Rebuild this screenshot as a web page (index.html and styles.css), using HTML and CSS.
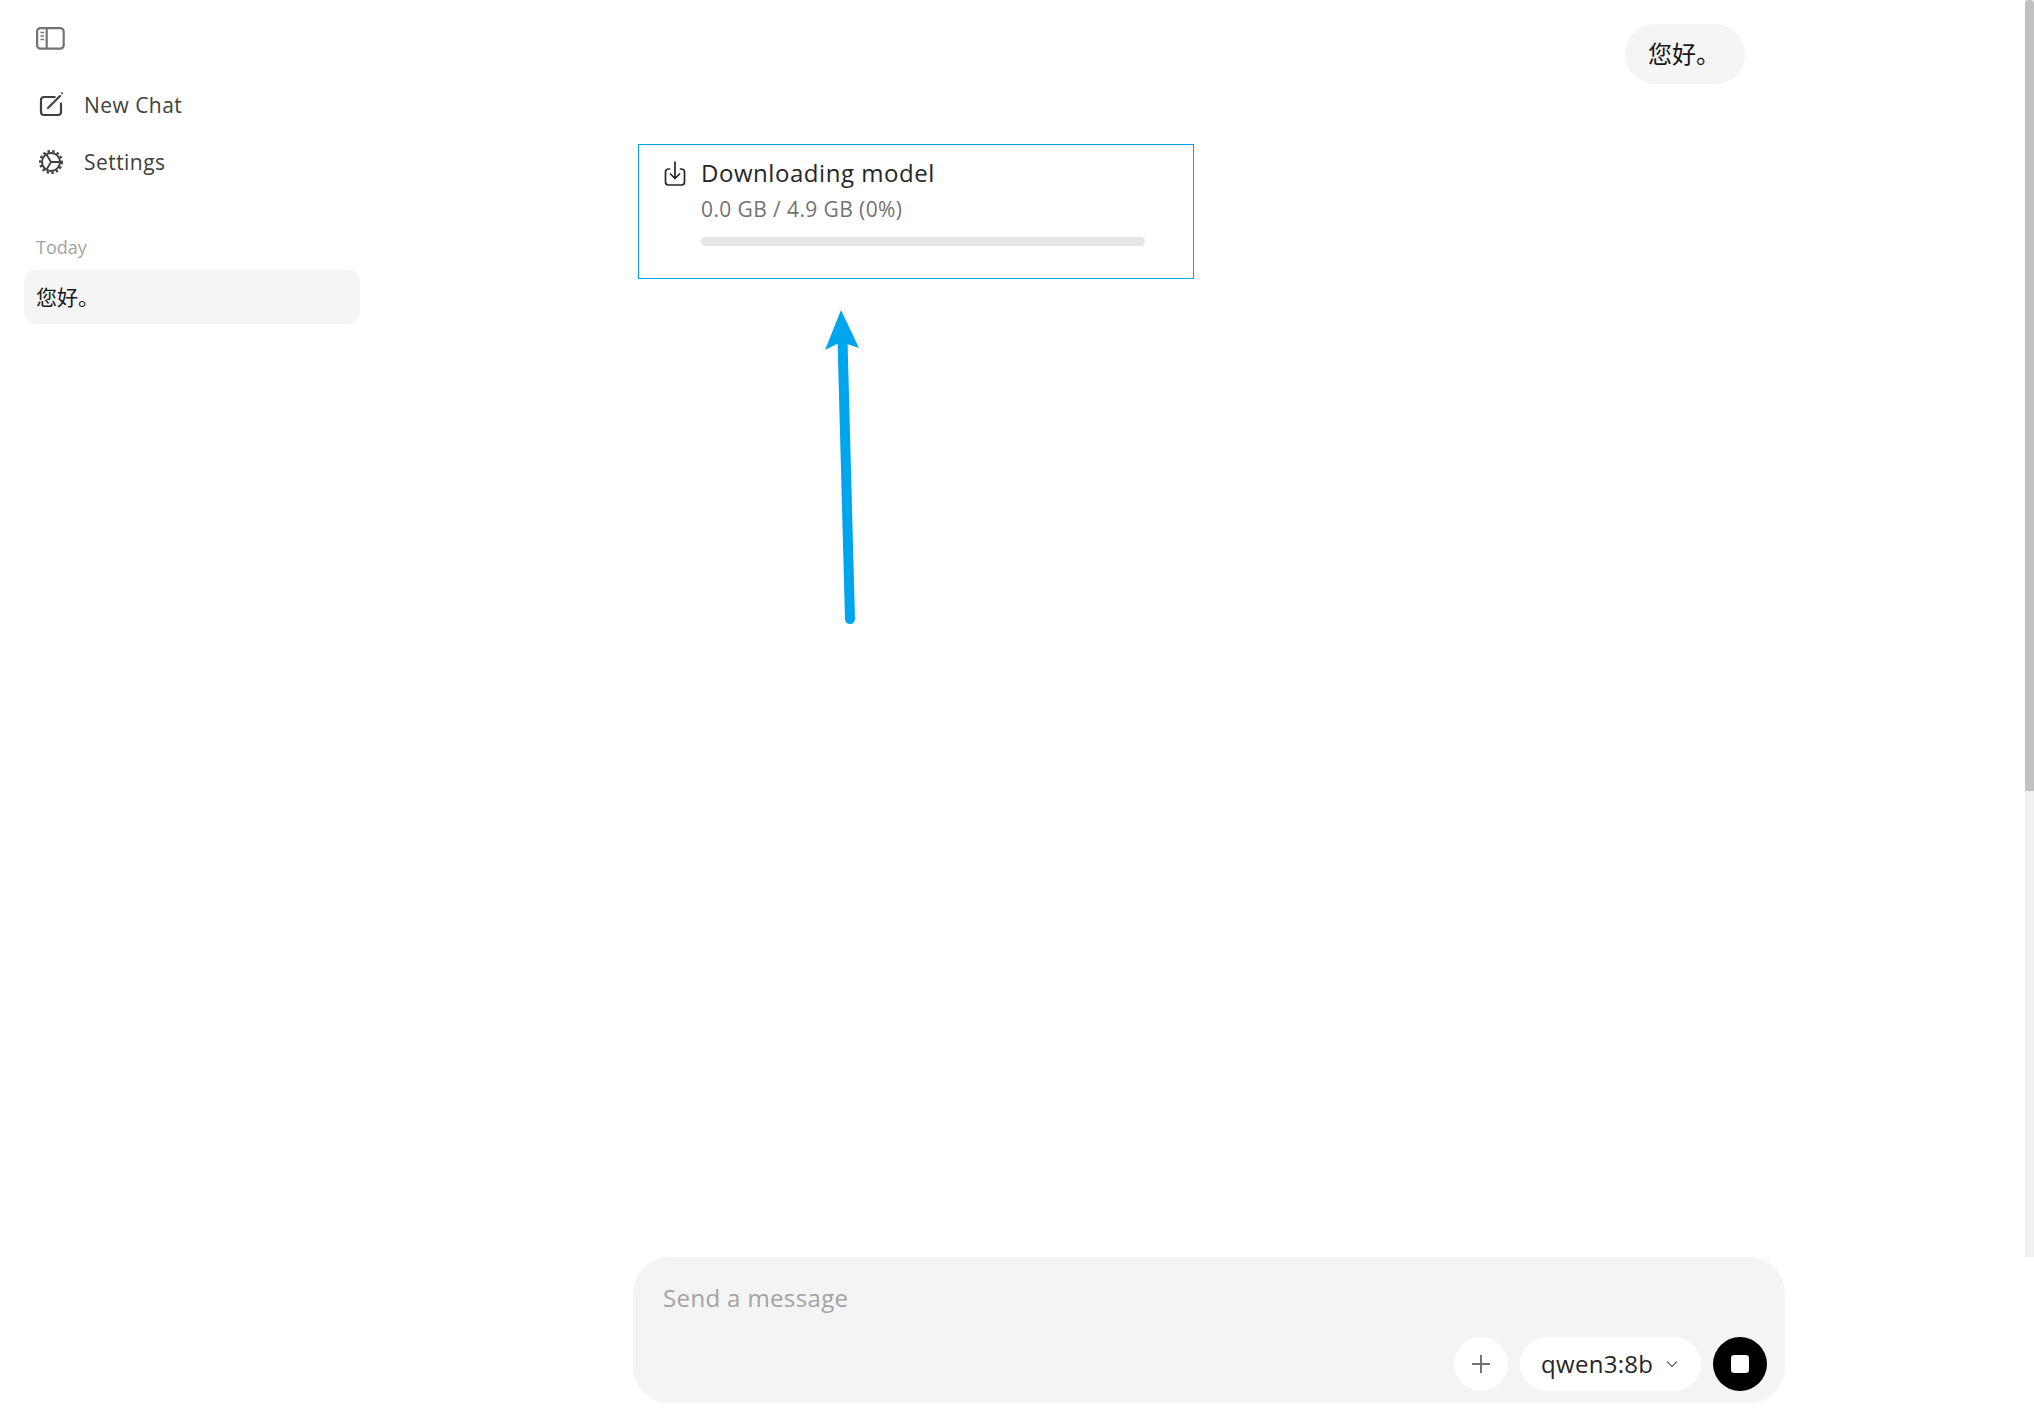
FILE: index.html
```html
<!DOCTYPE html>
<html lang="en">
<head>
<meta charset="utf-8">
<title>Chat</title>
<link rel="stylesheet" href="styles.css">
</head>
<body>
<div class="app">
  <aside class="sidebar">
    <button class="toggle" aria-label="Toggle sidebar">
      <svg class="toggle-icon" viewBox="0 0 30 24" fill="none" stroke="#737373" stroke-width="2.200">
        <rect x="1.100" y="1.100" width="26.600" height="20.600" rx="3.500"/>
        <path d="M10.700 1.500V21.500"/>
        <path d="M4.500 5.500H8M4.500 9H8M4.500 12.500H8" stroke-width="1.500"/>
      </svg>
    </button>
    <nav class="nav">
      <a class="nav-row">
        <svg class="nav-icon nav-icon-open" viewBox="-1 1 24 24" fill="none" stroke="#404040" stroke-width="2.200" stroke-linecap="round">
          <path d="M14.700 5H4A3 3 0 0 0 1 8V20A3 3 0 0 0 4 23H18A3 3 0 0 0 21 20V11.500"/>
          <path d="M8 16L20 4"/>
          <circle cx="22" cy="1.200" r="1" fill="#404040" stroke="none"/>
        </svg>
        <span>New Chat</span>
      </a>
      <a class="nav-row">
        <svg class="nav-icon" viewBox="0 0 24 24" fill="none" stroke="#404040">
          <circle cx="12" cy="12" r="9" stroke-width="2"/>
          <circle cx="12" cy="12" r="10.800" stroke-width="2.400" stroke-dasharray="2.400 2.310"/>
          <path d="M12 12H21M12 12L7.500 4.500M12 12L7.500 19.500" stroke-width="1.800"/>
        </svg>
        <span>Settings</span>
      </a>
    </nav>
    <div class="section-label">Today</div>
    <div class="history-item"><span class="history-text">您好。</span></div>
  </aside>

  <main class="main">
    <section class="thread">
      <div class="column">
        <div class="bubble-row"><div class="bubble">您好。</div></div>
        <div class="download-card">
          <svg class="download-icon" viewBox="0 0 24 26" fill="none" stroke="#262626" stroke-width="1.700" stroke-linecap="round" stroke-linejoin="round">
            <path d="M6.500 8H5.500A3 3 0 0 0 2.500 11V21A3 3 0 0 0 5.500 24H18.500A3 3 0 0 0 21.500 21V11A3 3 0 0 0 18.500 8H17.500"/>
            <path d="M12 1V17.500M7.500 13L12 17.500L16.500 13"/>
          </svg>
          <div class="download-body">
            <div class="download-title">Downloading model</div>
            <div class="download-meta">0.0 GB / 4.9 GB (0%)</div>
            <div class="progress"><div class="progress-fill"></div></div>
          </div>
        </div>
      </div>
      <div class="scrollbar"><div class="scrollbar-thumb"></div></div>
      <svg class="arrow" viewBox="0 0 40 320" fill="none">
        <path d="M27 309L19.500 30" stroke="#00a6ed" stroke-width="10" stroke-linecap="round"/>
        <path d="M18 0L36 38L24 34L14 34L2 40Z" fill="#00a6ed"/>
      </svg>
    </section>

    <footer class="composer">
      <div class="placeholder">Send a message</div>
      <div class="composer-actions">
        <button class="round-btn" aria-label="Attach">
          <svg class="plus-icon" viewBox="0 0 20 20" stroke="#737373" stroke-width="2"><path d="M10 1V19M1 10H19"/></svg>
        </button>
        <button class="model-pill">
          <span class="model-name">qwen3:8b</span>
          <svg class="chevron" viewBox="0 0 14 10" fill="none" stroke="#737373" stroke-width="1.500"><path d="M2 2.500L7 7.500L12 2.500"/></svg>
        </button>
        <button class="round-btn stop-btn" aria-label="Stop"><span class="stop-square"></span></button>
      </div>
    </footer>
  </main>
</div>
</body>
</html>
```

FILE: styles.css
```css
* { box-sizing: border-box; }

html, body {
  margin: 0;
  height: 100%;
  background: #fff;
}

body {
  font-family: "Open Sans", "Noto Sans CJK SC", sans-serif;
  color: #262626;
  overflow: hidden;
}

button {
  font: inherit;
  color: inherit;
  border: 0;
  padding: 0;
  background: none;
}

.app {
  display: flex;
  height: 1422px;
}

/* Sidebar */
.sidebar {
  width: 384px;
  flex: none;
  padding: 27px 24px 0;
  display: flex;
  flex-direction: column;
}

.toggle {
  display: flex;
  width: 30px;
  height: 24px;
  margin-left: 12px;
}

.toggle-icon { width: 30px; height: 24px; }

.nav {
  display: flex;
  flex-direction: column;
  gap: 3px;
  margin-top: 27px;
}

.nav-row {
  display: flex;
  align-items: center;
  gap: 21px;
  height: 54px;
  padding-left: 15px;
  font-size: 21px;
  letter-spacing: 0.45px;
  color: #404040;
}

.nav-icon { width: 24px; height: 24px; flex: none; }

.nav-icon-open { overflow: visible; }

.section-label {
  margin-top: 45px;
  padding-left: 12px;
  font-size: 18px;
  line-height: 27px;
  color: #a3a3a3;
}

.history-item {
  margin-top: 9px;
  height: 54px;
  border-radius: 12px;
  background: #f5f5f5;
  padding: 0 0 2px 12px;
  display: flex;
  align-items: center;
  font-size: 21px;
  color: #171717;
}

/* Main */
.main {
  flex: 1;
  display: flex;
  flex-direction: column;
  min-width: 0;
}

.thread {
  position: relative;
  height: 1257px;
  flex: none;
  display: flex;
  justify-content: center;
}

.column {
  width: 1152px;
  padding-top: 24px;
}

.bubble-row {
  display: flex;
  justify-content: flex-end;
  padding-right: 40px;
}

.bubble {
  height: 60px;
  padding: 0 25px 0 23px;
  border-radius: 30px;
  background: #f5f5f5;
  font-size: 24px;
  line-height: 60px;
  color: #171717;
}

.download-card {
  display: flex;
  gap: 14px;
  width: 556px;
  height: 135px;
  margin: 60px 0 0 5px;
  padding: 13px 24px 0 24px;
  border: 1px solid #00a2e8;
}

.download-icon { width: 24px; height: 26px; flex: none; margin-top: 3px; }

.download-body { flex: 1; }

.download-title {
  font-size: 24px;
  line-height: 30px;
  letter-spacing: 0.55px;
  color: #262626;
}

.download-meta {
  margin-top: 6px;
  font-size: 21px;
  line-height: 30px;
  letter-spacing: 0.4px;
  color: #737373;
}

.progress {
  margin-top: 13px;
  width: 444px;
  height: 9px;
  border-radius: 5px;
  background: #e5e5e5;
}

.progress-fill { width: 0; height: 100%; }

.scrollbar {
  position: absolute;
  top: 0;
  right: 0;
  bottom: 0;
  width: 9px;
  background: #f0f0f0;
}

.scrollbar-thumb {
  height: 791px;
  border-radius: 4px 4px 0 0;
  background: #c1c1c1;
}

.arrow {
  position: absolute;
  left: 439px;
  top: 310px;
  width: 40px;
  height: 320px;
}

/* Composer */
.composer {
  width: 1152px;
  height: 146px;
  margin: 0 auto;
  flex: none;
  border-radius: 36px;
  background: #f4f4f4;
  padding: 23px 18px 12px 30px;
  display: flex;
  flex-direction: column;
  justify-content: space-between;
}

.placeholder {
  font-size: 24px;
  line-height: 36px;
  letter-spacing: 0.37px;
  color: #a3a3a3;
}

.composer-actions {
  display: flex;
  justify-content: flex-end;
  gap: 12px;
}

.round-btn {
  width: 54px;
  height: 54px;
  border-radius: 50%;
  background: #fff;
  display: flex;
  align-items: center;
  justify-content: center;
}

.plus-icon { width: 20px; height: 20px; }

.model-pill {
  width: 181px;
  height: 54px;
  border-radius: 27px;
  background: #fff;
  display: flex;
  align-items: center;
  justify-content: space-between;
  padding: 0 22px 0 21px;
  font-size: 24px;
  letter-spacing: 0.3px;
  color: #262626;
}

.model-name { position: relative; top: -1px; }

.chevron { width: 14px; height: 10px; flex: none; }

.stop-btn { background: #000; }

.stop-square {
  width: 18px;
  height: 18px;
  border-radius: 3px;
  background: #fff;
}
```
